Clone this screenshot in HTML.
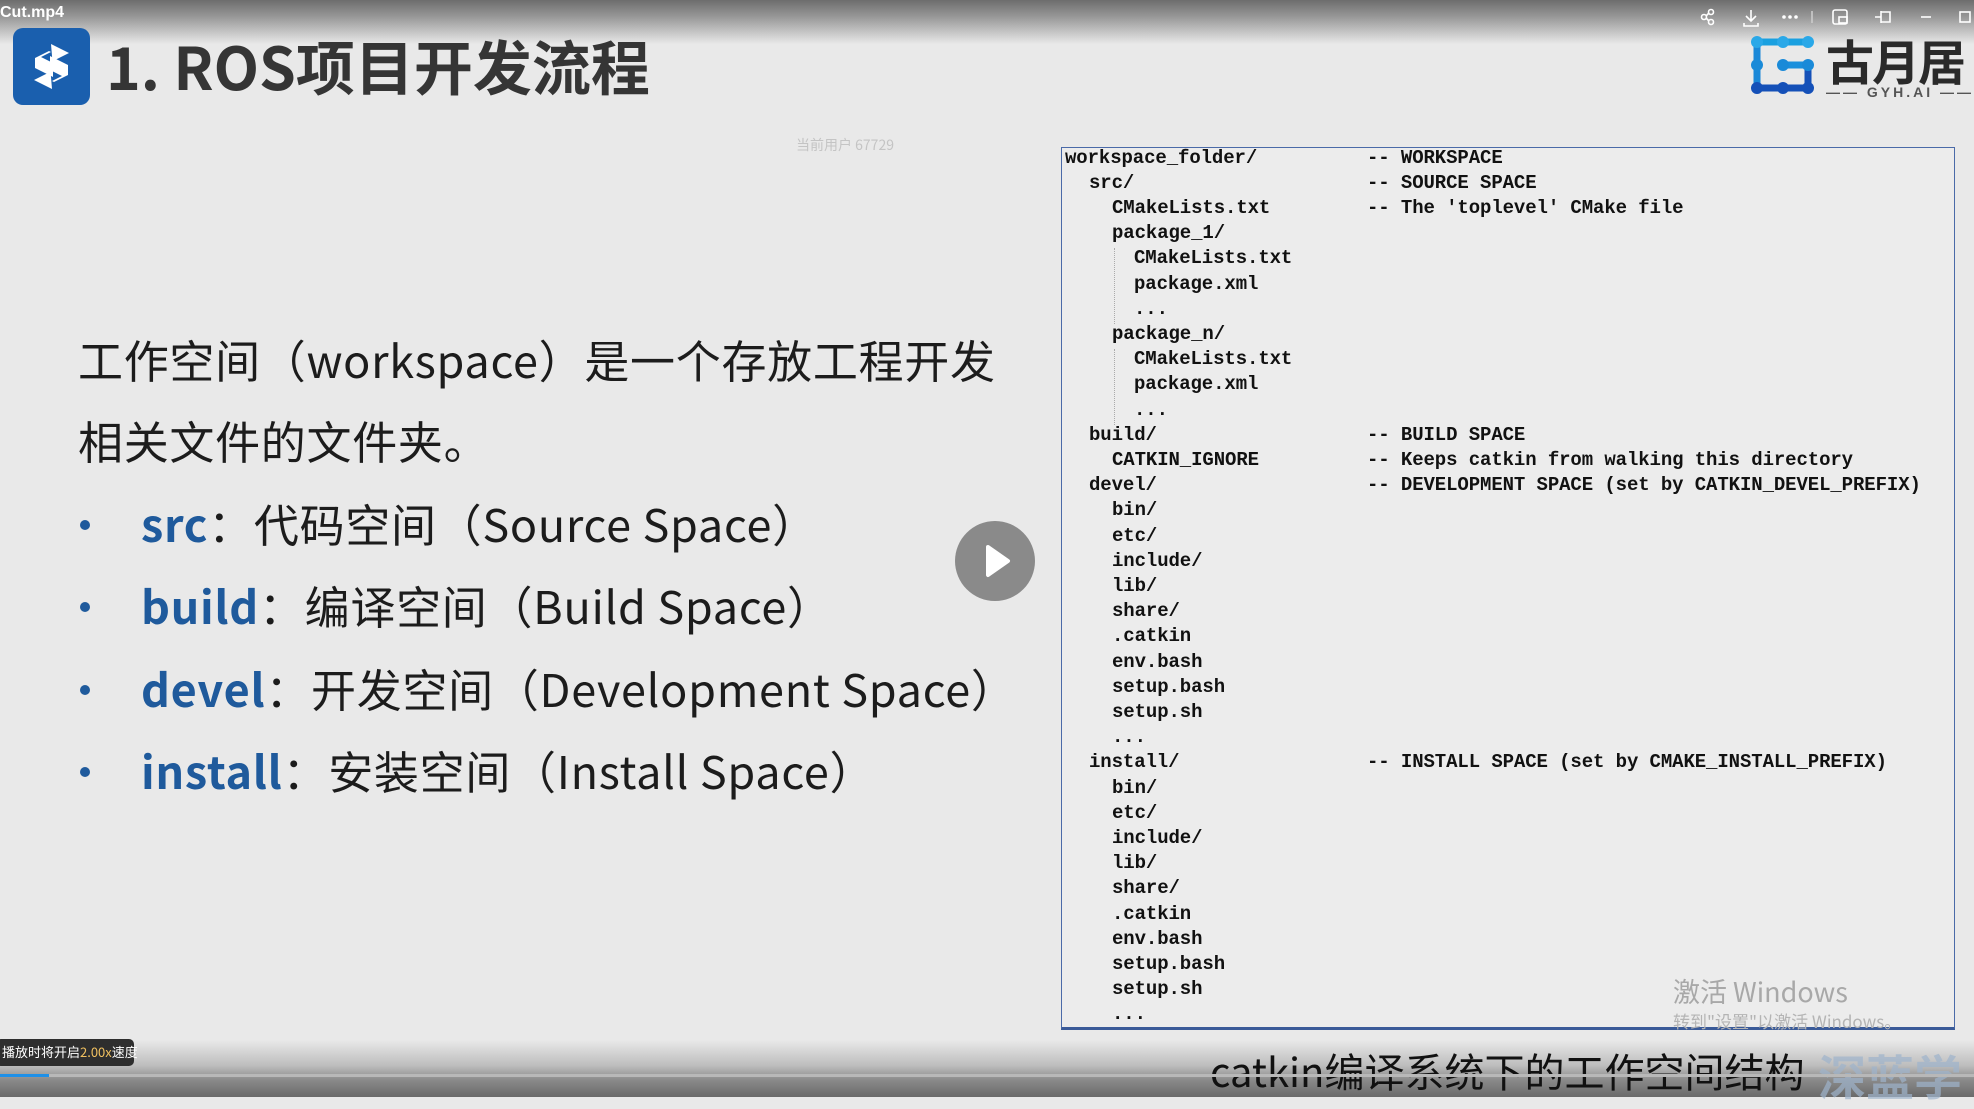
<!DOCTYPE html>
<html><head><meta charset="utf-8">
<style>
*{margin:0;padding:0;box-sizing:border-box}
body{width:1974px;height:1097px;overflow:hidden;background:#e9e9e9;position:relative;font-family:"Liberation Sans","Noto Sans CJK SC",sans-serif}
.top{position:absolute;left:0;top:0;width:1974px;height:44px;background:linear-gradient(#6d6d6d,#9a9a9a 40%,#e9e9e9)}
.bot{position:absolute;left:0;top:1040px;width:1974px;height:57px;background:linear-gradient(#e9e9e9,#bdbdbd 45%,#8a8a8a 70%,#6a6a6a)}
.abs{position:absolute;white-space:pre}
.c{position:absolute;font-family:"Liberation Mono",monospace;font-weight:bold;font-size:19px;letter-spacing:-0.1px;color:#111;line-height:25px;white-space:pre}
.main{position:absolute;left:78px;font-size:45px;color:#1c1c1c;line-height:1;white-space:pre;font-family:"Noto Sans CJK SC",sans-serif;letter-spacing:0.7px}
.main b{color:#1f5a9c;font-weight:bold}
.dot{position:absolute;left:80px;width:10px;height:10px;border-radius:50%;background:#1f5a9c}
</style></head><body>
<div class="top"></div>
<div class="abs" style="left:0;top:4px;font-size:16px;font-weight:bold;color:#fff">Cut.mp4</div>
<svg class="abs" style="left:1695px;top:4px" width="279" height="26" viewBox="0 0 279 26" fill="none" stroke="#fff" stroke-width="1.6">
<circle cx="9" cy="13" r="2.5"/><circle cx="16" cy="8" r="2.5"/><circle cx="16" cy="18" r="2.5"/><path d="M11 12l3-3M11 14l3 3"/>
<path d="M56 6v10M51 12l5 5 5-5M49 19v3h14v-3"/>
<circle cx="89" cy="13" r="1" fill="#fff"/><circle cx="95" cy="13" r="1" fill="#fff"/><circle cx="101" cy="13" r="1" fill="#fff"/>
<path d="M117 7v12" stroke="#ccc"/>
<rect x="138" y="6" width="14" height="14" rx="2"/><rect x="144" y="13" width="8" height="6"/>
<path d="M186 7v12M186 8h9v10h-9M180 13h6"/>
<path d="M226 13h10"/><rect x="265" y="8" width="10" height="10"/>
</svg>
<svg class="abs" style="left:13px;top:28px" width="77" height="77" viewBox="0 0 77 77">
<rect width="77" height="77" rx="10" fill="#1a5fae"/>
<path d="M38 16l18 9-18 9-10-5 10-5-2-1-14 7v10l18 9v-9" fill="#fff"/>
<path d="M39 61l-18-9 18-9 10 5-10 5 2 1 14-7V37l-18-9v9" fill="#fff"/>
</svg>
<div class="abs" style="left:106px;top:30px;font-size:59px;font-weight:bold;color:#353535;font-family:'Noto Sans CJK SC',sans-serif;line-height:70px">1. ROS项目开发流程</div>
<svg class="abs" style="left:1748px;top:36px" width="70" height="62" viewBox="0 0 70 62" stroke-width="7" stroke-linecap="round" fill="none">
<path d="M9 6H60" stroke="#1aa0e0"/><path d="M9 6V52" stroke="#1a88d8"/><path d="M35 29H60" stroke="#1a8fdc"/><path d="M9 52H60V29" stroke="#1450b8"/>
<g fill="#2aa8e8"><circle cx="9" cy="6" r="6"/><circle cx="35" cy="6" r="6"/><circle cx="60" cy="6" r="6"/></g>
<g fill="#1a8ad8"><circle cx="9" cy="29" r="6"/><circle cx="35" cy="29" r="6"/><circle cx="60" cy="29" r="6"/></g>
<g fill="#1450b8"><circle cx="9" cy="52" r="6"/><circle cx="35" cy="52" r="6"/><circle cx="60" cy="52" r="6"/></g>
</svg>
<div class="abs" style="left:1826px;top:30px;font-size:48px;font-weight:bold;color:#2a2a2a;font-family:'Noto Sans CJK SC',sans-serif;line-height:58px;letter-spacing:-2px">古月居</div>
<div class="abs" style="left:1826px;top:84px;font-size:14px;font-weight:bold;color:#555;letter-spacing:3px">—— GYH.AI ——</div>
<div class="abs" style="left:796px;top:135px;font-size:14px;color:#c4c4c4;font-family:'Noto Sans CJK SC',sans-serif">当前用户 67729</div>

<div class="main" style="top:336px">工作空间（workspace）是一个存放工程开发</div>
<div class="main" style="top:417px">相关文件的文件夹。</div>
<div class="dot" style="top:520px"></div>
<div class="main" style="left:141px;top:500px"><b>src</b>：代码空间（Source Space）</div>
<div class="dot" style="top:602px"></div>
<div class="main" style="left:141px;top:582px"><b>build</b>：编译空间（Build Space）</div>
<div class="dot" style="top:685px"></div>
<div class="main" style="left:141px;top:665px"><b>devel</b>：开发空间（Development Space）</div>
<div class="dot" style="top:767px"></div>
<div class="main" style="left:141px;top:747px"><b>install</b>：安装空间（Install Space）</div>

<div class="abs" style="left:955px;top:521px;width:80px;height:80px;border-radius:50%;background:#8a8a8a"></div>
<svg class="abs" style="left:955px;top:521px" width="80" height="80"><path d="M33 26l20 14-20 14z" fill="#fff" stroke="#fff" stroke-width="4" stroke-linejoin="round"/></svg>

<div class="abs" style="left:1061px;top:147px;width:894px;height:883px;border:1.5px solid #4a6aa8;border-bottom:3px solid #3a5a98;background:#ececec"></div>
<div class="abs" style="left:1114px;top:248px;height:76px;border-left:1px dotted #aaa"></div>
<div class="abs" style="left:1114px;top:349px;height:76px;border-left:1px dotted #aaa"></div>

<div class="c" style="left:1065px;top:146px">workspace_folder/</div>
<div class="c" style="left:1089px;top:171px">src/</div>
<div class="c" style="left:1112px;top:196px">CMakeLists.txt</div>
<div class="c" style="left:1112px;top:221px">package_1/</div>
<div class="c" style="left:1134px;top:246px">CMakeLists.txt</div>
<div class="c" style="left:1134px;top:272px">package.xml</div>
<div class="c" style="left:1134px;top:297px">...</div>
<div class="c" style="left:1112px;top:322px">package_n/</div>
<div class="c" style="left:1134px;top:347px">CMakeLists.txt</div>
<div class="c" style="left:1134px;top:372px">package.xml</div>
<div class="c" style="left:1134px;top:398px">...</div>
<div class="c" style="left:1089px;top:423px">build/</div>
<div class="c" style="left:1112px;top:448px">CATKIN_IGNORE</div>
<div class="c" style="left:1089px;top:473px">devel/</div>
<div class="c" style="left:1112px;top:498px">bin/</div>
<div class="c" style="left:1112px;top:524px">etc/</div>
<div class="c" style="left:1112px;top:549px">include/</div>
<div class="c" style="left:1112px;top:574px">lib/</div>
<div class="c" style="left:1112px;top:599px">share/</div>
<div class="c" style="left:1112px;top:624px">.catkin</div>
<div class="c" style="left:1112px;top:650px">env.bash</div>
<div class="c" style="left:1112px;top:675px">setup.bash</div>
<div class="c" style="left:1112px;top:700px">setup.sh</div>
<div class="c" style="left:1112px;top:725px">...</div>
<div class="c" style="left:1089px;top:750px">install/</div>
<div class="c" style="left:1112px;top:776px">bin/</div>
<div class="c" style="left:1112px;top:801px">etc/</div>
<div class="c" style="left:1112px;top:826px">include/</div>
<div class="c" style="left:1112px;top:851px">lib/</div>
<div class="c" style="left:1112px;top:876px">share/</div>
<div class="c" style="left:1112px;top:902px">.catkin</div>
<div class="c" style="left:1112px;top:927px">env.bash</div>
<div class="c" style="left:1112px;top:952px">setup.bash</div>
<div class="c" style="left:1112px;top:977px">setup.sh</div>
<div class="c" style="left:1112px;top:1002px">...</div>

<div class="c" style="left:1367px;top:146px">-- WORKSPACE</div>
<div class="c" style="left:1367px;top:171px">-- SOURCE SPACE</div>
<div class="c" style="left:1367px;top:196px">-- The 'toplevel' CMake file</div>
<div class="c" style="left:1367px;top:423px">-- BUILD SPACE</div>
<div class="c" style="left:1367px;top:448px">-- Keeps catkin from walking this directory</div>
<div class="c" style="left:1367px;top:473px">-- DEVELOPMENT SPACE (set by CATKIN_DEVEL_PREFIX)</div>
<div class="c" style="left:1367px;top:750px">-- INSTALL SPACE (set by CMAKE_INSTALL_PREFIX)</div>

<div class="abs" style="left:1673px;top:974px;font-size:27px;color:#a8a8a8;font-family:'Noto Sans CJK SC',sans-serif;line-height:34px">激活 Windows</div>
<div class="abs" style="left:1673px;top:1010px;font-size:17px;color:#b4b4b4;font-family:'Noto Sans CJK SC',sans-serif;line-height:22px">转到"设置"以激活 Windows。</div>

<div class="bot"></div>
<div class="abs" style="left:1818px;top:1044px;font-size:48px;font-weight:bold;color:#9fb4cc;opacity:.7;font-family:'Noto Sans CJK SC',sans-serif;line-height:60px">深蓝学</div>
<div class="abs" style="left:1210px;top:1042px;font-size:40px;color:#111;font-family:'Noto Sans CJK SC',sans-serif;line-height:56px">catkin编译系统下的工作空间结构</div>
<div class="abs" style="left:0;top:1074px;width:1974px;height:3px;background:#b8b8b8"></div>
<div class="abs" style="left:0;top:1074px;width:49px;height:3px;background:#1e90e8"></div>
<div class="abs" style="left:-4px;top:1039px;width:138px;height:27px;border-radius:5px;background:#2e2e2e"></div>
<div class="abs" style="left:2px;top:1042px;font-size:13px;color:#fff;font-family:'Noto Sans CJK SC',sans-serif;line-height:20px">播放时将开启<span style="color:#f0c060">2.00x</span>速度</div>
</body></html>
